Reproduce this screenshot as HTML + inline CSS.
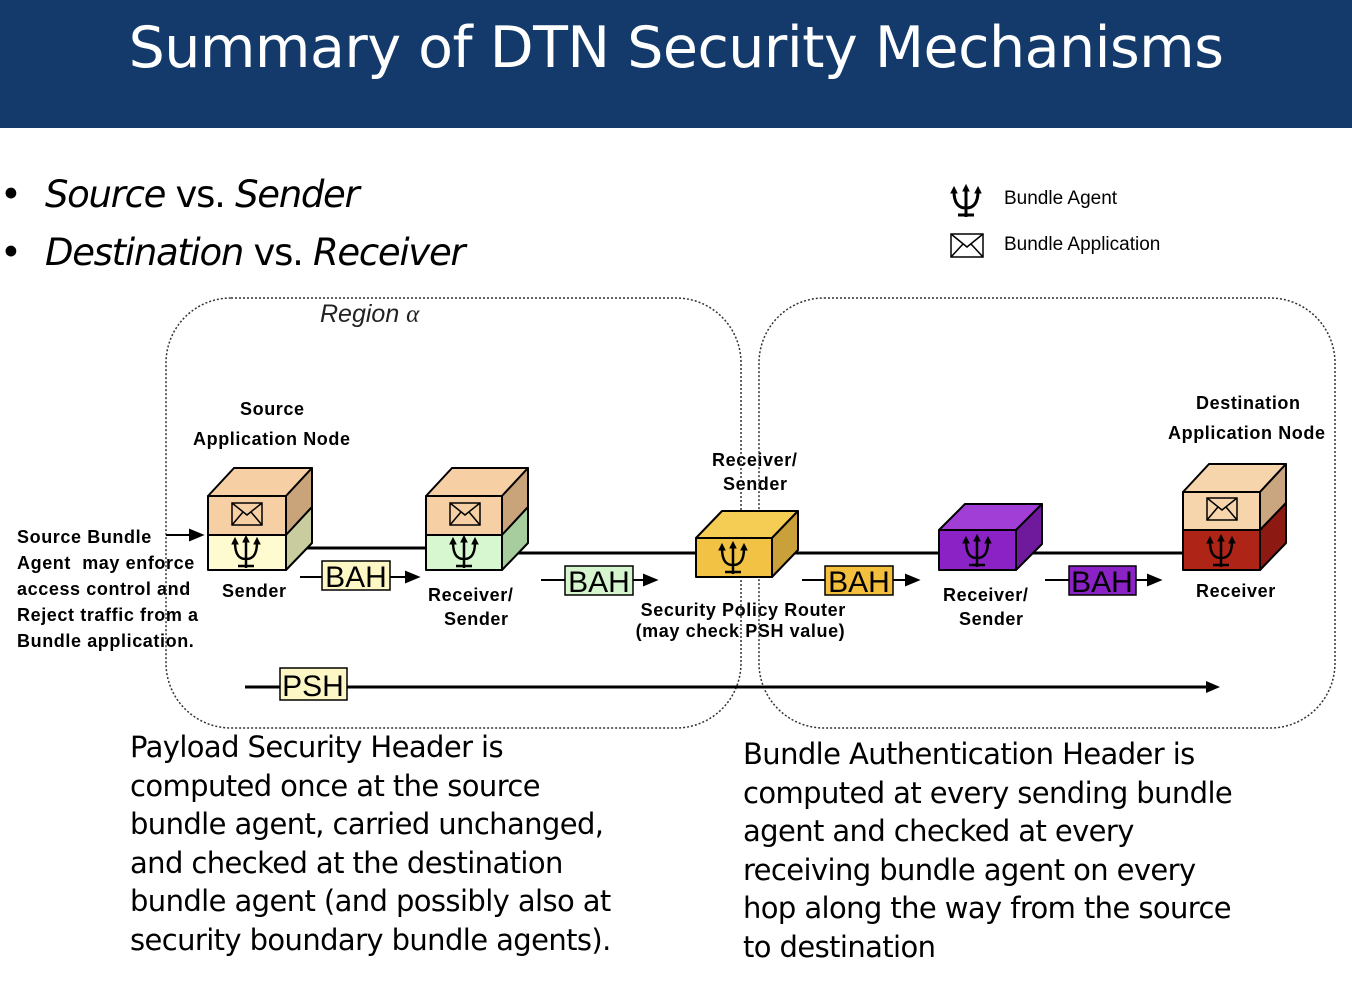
<!DOCTYPE html>
<html><head><meta charset="utf-8"><style>
body{margin:0;width:1352px;height:996px;background:#fff;overflow:hidden;position:relative;font-family:"Liberation Sans","DejaVu Sans",sans-serif}
.hdr{position:absolute;left:0;top:0;width:1352px;height:128px;background:#133a6a}
.hdr div{position:absolute;left:0;width:1352px;top:15px;text-align:center;color:#fff;font-size:57px;font-family:"DejaVu Sans",sans-serif;letter-spacing:-0.5px}
.t{position:absolute;white-space:nowrap}
.big{font-family:"DejaVu Sans",sans-serif;font-size:29px;line-height:38.5px;color:#000;letter-spacing:-0.6px}
.b{font-weight:bold;font-size:18px;letter-spacing:0.6px}
</style></head><body>
<div class="hdr"><div>Summary of DTN Security Mechanisms</div></div>
<div class="t" style="left:0;top:173px;font-size:37px;font-family:'DejaVu Sans',sans-serif;letter-spacing:-1.3px">•</div>
<div class="t" style="left:45px;top:173px;font-size:37px;font-family:'DejaVu Sans',sans-serif;letter-spacing:-1.3px"><i>Source</i> vs. <i>Sender</i></div>
<div class="t" style="left:0;top:231px;font-size:37px;font-family:'DejaVu Sans',sans-serif;letter-spacing:-1.3px">•</div>
<div class="t" style="left:45px;top:231px;font-size:37px;font-family:'DejaVu Sans',sans-serif;letter-spacing:-1.3px"><i>Destination</i> vs. <i>Receiver</i></div>
<div class="t" style="left:1004px;top:188px;font-size:19px">Bundle Agent</div>
<div class="t" style="left:1004px;top:234px;font-size:19px">Bundle Application</div>
<div class="t" style="left:320px;top:300px;font-size:25px;font-style:italic;color:#222">Region <span style="font-family:'Liberation Serif',serif">α</span></div>
<div class="t b" style="left:240px;top:399px">Source</div>
<div class="t b" style="left:193px;top:429px">Application Node</div>
<div class="t b" style="left:1196px;top:393px">Destination</div>
<div class="t b" style="left:1168px;top:423px">Application Node</div>
<div class="t b" style="left:712px;top:450px">Receiver/</div>
<div class="t b" style="left:723px;top:474px">Sender</div>
<div class="t b" style="left:17px;top:524px;line-height:26px">Source Bundle<br>Agent &nbsp;may enforce<br>access control and<br>Reject traffic from a<br>Bundle application.</div>
<div class="t b" style="left:222px;top:581px">Sender</div>
<div class="t b" style="left:428px;top:583px;text-align:center;line-height:24px">Receiver/<br>&nbsp;&nbsp;Sender</div>
<div class="t b" style="left:943px;top:583px;text-align:center;line-height:24px">Receiver/<br>&nbsp;&nbsp;Sender</div>
<div class="t b" style="left:1196px;top:581px">Receiver</div>
<div class="t b" style="left:635px;top:600px;line-height:21px;text-align:center">&nbsp;Security Policy Router<br>(may check PSH value)</div>
<div class="t big" style="left:130px;top:728px">Payload Security Header is<br>computed once at the source<br>bundle agent, carried unchanged,<br>and checked at the destination<br>bundle agent (and possibly also at<br>security boundary bundle agents).</div>
<div class="t big" style="left:743px;top:735px">Bundle Authentication Header is<br>computed at every sending bundle<br>agent and checked at every<br>receiving bundle agent on every<br>hop along the way from the source<br>to destination</div>
<svg width="1352" height="996" style="position:absolute;left:0;top:0" xmlns="http://www.w3.org/2000/svg">
<g fill="none" stroke="#333" stroke-width="1.5" stroke-dasharray="2,2">
<rect x="166" y="298" width="575" height="430" rx="65"/>
<rect x="759" y="298" width="576" height="430" rx="65"/>
</g>
<g stroke="#000" stroke-width="3">
<line x1="286" y1="548" x2="426" y2="548"/>
<line x1="502" y1="553" x2="696" y2="553"/>
<line x1="772" y1="553" x2="939" y2="553"/>
<line x1="1016" y1="553" x2="1183" y2="553"/>
<line x1="245" y1="687" x2="1208" y2="687"/>
</g>
<polygon points="1206,681 1220,687 1206,693" fill="#000"/>
<g stroke="#000" stroke-width="2">
<line x1="166" y1="535" x2="192" y2="535"/><polygon points="190,530 202,535 190,540" fill="#000"/>
<line x1="300" y1="577" x2="406" y2="577"/><polygon points="406,572 418,577 406,582" fill="#000"/>
<line x1="541" y1="580" x2="644" y2="580"/><polygon points="644,575 656,580 644,585" fill="#000"/>
<line x1="802" y1="580" x2="906" y2="580"/><polygon points="906,575 918,580 906,585" fill="#000"/>
<line x1="1045" y1="580" x2="1148" y2="580"/><polygon points="1148,575 1160,580 1148,585" fill="#000"/>
</g>
<g stroke="#000" stroke-width="1.5">
<rect x="322" y="561" width="68" height="29" fill="#fdf7c5"/>
<rect x="565" y="566" width="68" height="29" fill="#d5f5cf"/>
<rect x="825" y="566" width="68" height="29" fill="#f3bf3c"/>
<rect x="1069" y="566" width="67" height="29" fill="#8a22c6"/>
<rect x="280" y="668" width="67" height="32" fill="#fdf7c5"/>
</g>
<g font-family="Liberation Sans" font-size="30" text-anchor="middle">
<text x="356" y="587">BAH</text><text x="599" y="592">BAH</text><text x="859" y="592">BAH</text><text x="1102" y="592">BAH</text><text x="313" y="696">PSH</text>
</g>
<g stroke="#000" stroke-width="2" stroke-linejoin="round">
<polygon points="208,496 234,468 312,468 286,496" fill="#f6cfa4"/>
<polygon points="286,496 312,468 312,507 286,535" fill="#c9a47a"/>
<polygon points="286,535 312,507 312,543 286,570" fill="#c9cc9f"/>
<rect x="208" y="496" width="78" height="39" fill="#f6cfa4"/>
<rect x="208" y="535" width="78" height="35" fill="#fdfbcf"/>
<polygon points="426,496 452,468 528,468 502,496" fill="#f6cfa4"/>
<polygon points="502,496 528,468 528,507 502,535" fill="#c9a47a"/>
<polygon points="502,535 528,507 528,543 502,570" fill="#a7cd9f"/>
<rect x="426" y="496" width="76" height="39" fill="#f6cfa4"/>
<rect x="426" y="535" width="76" height="35" fill="#d6f7cf"/>
<polygon points="696,538 722,511 798,511 772,538" fill="#f5cd55"/>
<polygon points="772,538 798,511 798,550 772,577" fill="#caa03a"/>
<rect x="696" y="538" width="76" height="39" fill="#f2c244"/>
<polygon points="939,530 965,504 1042,504 1016,530" fill="#a13ed6"/>
<polygon points="1016,530 1042,504 1042,544 1016,570" fill="#6f1a9c"/>
<rect x="939" y="530" width="77" height="40" fill="#8a22c6"/>
<polygon points="1183,492 1209,464 1286,464 1260,492" fill="#f6d5ad"/>
<polygon points="1260,492 1286,464 1286,503 1260,530" fill="#caa680"/>
<polygon points="1260,530 1286,503 1286,543 1260,570" fill="#8c1a12"/>
<rect x="1183" y="492" width="77" height="38" fill="#f6d5ad"/>
<rect x="1183" y="530" width="77" height="40" fill="#ae2518"/>
</g>
<g fill="none" stroke="#000" stroke-width="1.5">
<g transform="translate(232,503)"><rect width="30" height="22" fill="#f6cfa4"/><path d="M0,0 L15,12 L30,0 M0,22 L11,9 M30,22 L19,9"/></g>
<g transform="translate(450,503)"><rect width="30" height="22" fill="#f6cfa4"/><path d="M0,0 L15,12 L30,0 M0,22 L11,9 M30,22 L19,9"/></g>
<g transform="translate(1207,498)"><rect width="30" height="22" fill="#f6d5ad"/><path d="M0,0 L15,12 L30,0 M0,22 L11,9 M30,22 L19,9"/></g>
<g transform="translate(951,234)"><rect width="32" height="23" fill="#fff"/><path d="M0,0 L16,13 L32,0 M0,23 L12,10 M32,23 L20,10"/></g>
</g>
<g fill="none" stroke="#000" stroke-width="2.5">
<g transform="translate(246,552)"><path d="M0,-12 V16 M-8,14 H8 M-11,-10 C-11,4 -6,7 0,7 C6,7 11,4 11,-10"/><path d="M-3,-10 L0,-16 L3,-10 Z M-14,-8 L-11,-14 L-8,-8 Z M8,-8 L11,-14 L14,-8 Z" fill="#000" stroke-width="1"/></g>
<g transform="translate(464,552)"><path d="M0,-12 V16 M-8,14 H8 M-11,-10 C-11,4 -6,7 0,7 C6,7 11,4 11,-10"/><path d="M-3,-10 L0,-16 L3,-10 Z M-14,-8 L-11,-14 L-8,-8 Z M8,-8 L11,-14 L14,-8 Z" fill="#000" stroke-width="1"/></g>
<g transform="translate(733,558)"><path d="M0,-12 V16 M-8,14 H8 M-11,-10 C-11,4 -6,7 0,7 C6,7 11,4 11,-10"/><path d="M-3,-10 L0,-16 L3,-10 Z M-14,-8 L-11,-14 L-8,-8 Z M8,-8 L11,-14 L14,-8 Z" fill="#000" stroke-width="1"/></g>
<g transform="translate(977,551)"><path d="M0,-12 V16 M-8,14 H8 M-11,-10 C-11,4 -6,7 0,7 C6,7 11,4 11,-10"/><path d="M-3,-10 L0,-16 L3,-10 Z M-14,-8 L-11,-14 L-8,-8 Z M8,-8 L11,-14 L14,-8 Z" fill="#000" stroke-width="1"/></g>
<g transform="translate(1221,551)"><path d="M0,-12 V16 M-8,14 H8 M-11,-10 C-11,4 -6,7 0,7 C6,7 11,4 11,-10"/><path d="M-3,-10 L0,-16 L3,-10 Z M-14,-8 L-11,-14 L-8,-8 Z M8,-8 L11,-14 L14,-8 Z" fill="#000" stroke-width="1"/></g>
<g transform="translate(966,201)"><path d="M0,-12 V16 M-8,14 H8 M-12,-10 C-12,4 -6,7 0,7 C6,7 12,4 12,-10" stroke-width="3"/><path d="M-3,-10 L0,-16 L3,-10 Z M-15,-8 L-12,-14 L-9,-8 Z M9,-8 L12,-14 L15,-8 Z" fill="#000" stroke-width="1"/></g>
</g>
</svg>
</body></html>
